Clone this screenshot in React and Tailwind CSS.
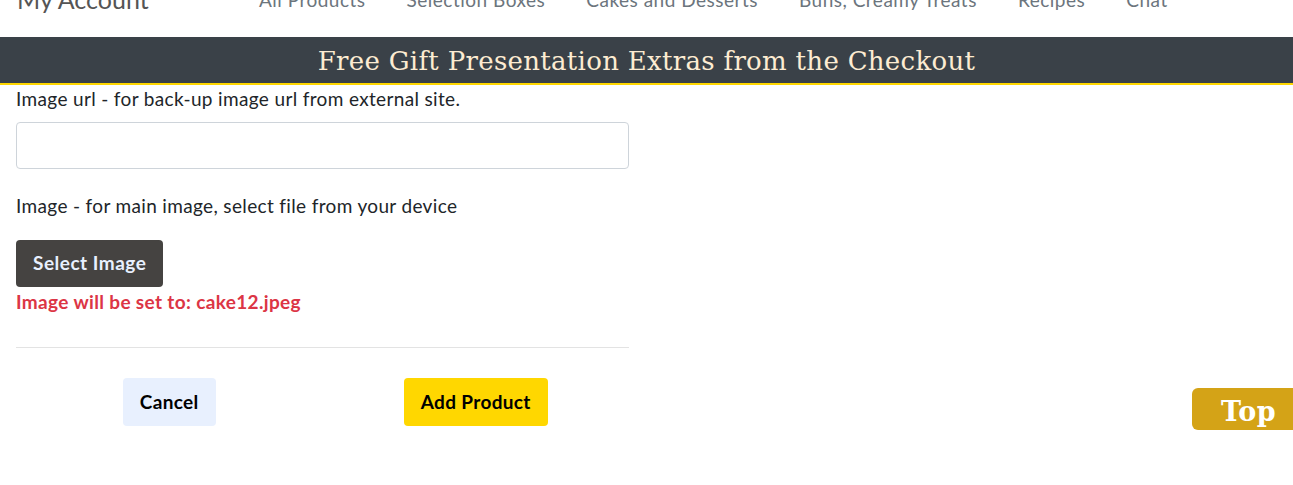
import { useState } from "react";

const navLinks = ["All Products", "Selection Boxes", "Cakes and Desserts", "Buns, Creamy Treats", "Recipes", "Chat"];

const App = () => {
    const [imageUrl, setImageUrl] = useState("");

    return (
        <div className="min-h-screen bg-white font-['Lato','Liberation_Sans',sans-serif] text-[19px] tracking-[0.35px] text-[#212529]">
            {/* Nav (scrolled, only the bottom shows) */}
            <nav className="h-[37px] overflow-hidden bg-white">
                <div className="flex items-start -mt-[15px] pl-[17px]">
                    <span className="text-[25px] leading-[29px] text-[#555] w-[242px] tracking-[0px]">My Account</span>
                    <div className="flex gap-[41px] pt-[4px]">
                        {navLinks.map((l) => (
                            <a key={l} className="text-[#6c757d] leading-[22px] tracking-[0.5px]">{l}</a>
                        ))}
                    </div>
                </div>
            </nav>

            {/* Banner */}
            <div className="h-[48px] bg-[#3a4148] border-b-2 border-[#ffd700] flex items-center justify-center">
                <h1 className="font-['DejaVu_Serif','Liberation_Serif',serif] text-[26px] tracking-[0.3px] text-[#fdecd2] pt-[2px]">
                    Free Gift Presentation Extras from the Checkout
                </h1>
            </div>

            {/* Form */}
            <div className="w-[613px] ml-[16px]">
                <label className="block leading-[27px] mb-[10px]">Image url - for back-up image url from external site.</label>
                <input
                    type="text"
                    value={imageUrl}
                    onChange={(e) => setImageUrl(e.target.value)}
                    className="block w-full h-[47px] border border-[#ced4da] rounded-[4px] px-3"
                />

                <label className="block leading-[27px] mt-[23px] mb-[21px]">Image - for main image, select file from your device</label>
                <button className="h-[47px] px-[17px] rounded-[4px] bg-[#454341] text-[#e8f0fe] font-bold tracking-[0.5px]">Select Image</button>
                <p className="leading-[27px] mt-[1px] font-bold text-[#dc3545]">Image will be set to: cake12.jpeg</p>

                <hr className="mt-[32px] border-t border-[#e3e3e3]" />

                <div className="grid grid-cols-2 mt-[30px]">
                    <div className="flex justify-center">
                        <button className="h-[48px] px-[17px] rounded-[4px] bg-[#e8f0fe] text-black font-bold">Cancel</button>
                    </div>
                    <div className="flex justify-center">
                        <button className="h-[48px] px-[17px] rounded-[4px] bg-[#ffd700] text-black font-bold">Add Product</button>
                    </div>
                </div>
            </div>

            {/* Back to top */}
            <button className="fixed right-0 bottom-[55px] h-[42px] w-[101px] rounded-l-[6px] bg-[#d4a317] text-white font-['DejaVu_Serif','Liberation_Serif',serif] font-bold text-[27px] pl-[29px] pt-[4px] text-left">
                Top
            </button>
        </div>
    );
};

export default App;
